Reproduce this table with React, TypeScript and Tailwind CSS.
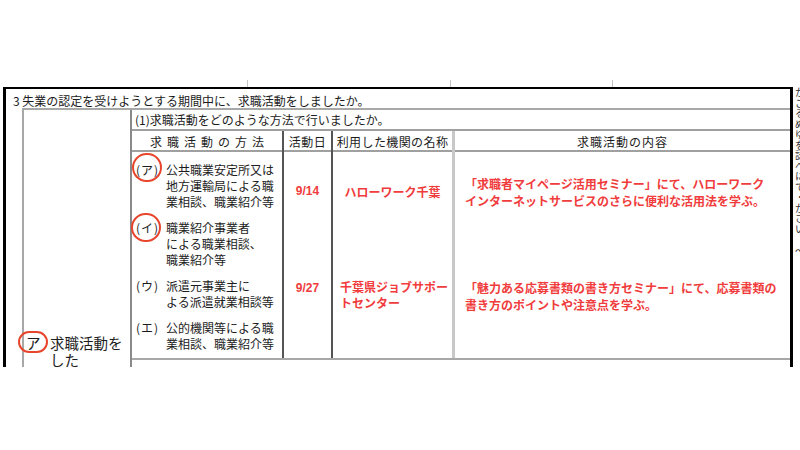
const RED = "text-[#f03c3c]";

type Method = { mark: string; lines: string[]; circle?: { left: string; top: string } };

const METHODS: Method[] = [
  { mark: "ア", lines: ["公共職業安定所又は", "地方運輸局による職", "業相談、職業紹介等"], circle: { left: "left-[-4px]", top: "top-[-9px]" } },
  { mark: "イ", lines: ["職業紹介事業者", "による職業相談、", "職業紹介等"], circle: { left: "left-[-5px]", top: "top-[-7px]" } },
  { mark: "ウ", lines: ["派遣元事業主に", "よる派遣就業相談等"] },
  { mark: "エ", lines: ["公的機関等による職", "業相談、職業紹介等"] },
];

const EDGE = ["か", "こ", "る", "ぬ", "ゆ", "を", "認", "べ", "に", "て", "・", "か", "さ", "い"];

function MethodEntry({ m }: { m: Method }) {
  return (
    <div className="flex">
      <span className="relative w-[30px] shrink-0 leading-[16px] whitespace-nowrap">
        <span className="mr-[1px]">(</span>
        {m.mark}
        <span className="ml-[1px]">)</span>
        {m.circle && (
          <span
            className={`absolute ${m.circle.left} ${m.circle.top} h-[29px] w-[30px] rounded-full border-2 border-[#e8462c]`}
          />
        )}
      </span>
      <div className="flex flex-col whitespace-nowrap leading-[16px]">
        {m.lines.map((l) => (
          <span key={l}>{l}</span>
        ))}
      </div>
    </div>
  );
}

export default function App() {
  return (
    <div className="h-[450px] w-[800px] overflow-hidden bg-white font-['Noto_Sans_CJK_JP',sans-serif] text-[12px] text-[#1c1c1c]">
      <div className="h-[80px]" />

      {/* stubs of the table above */}
      <div className="flex h-[7px]">
        <div className="w-[247px]" />
        <div className="w-px bg-[#c4c4c4]" />
        <div className="w-[202px]" />
        <div className="w-px bg-[#c4c4c4]" />
        <div className="w-[161px]" />
        <div className="w-px bg-[#c4c4c4]" />
      </div>

      <div className="flex h-[280px] overflow-hidden">
        <div className="w-[3px] shrink-0" />

        <div className="flex w-[790px] shrink-0 flex-col border-l-[3px] border-r-[3px] border-t-2 border-black">
          <div className="h-[19px] shrink-0 whitespace-nowrap pl-[7px] pt-[4px] leading-[16px]">
            3 失業の認定を受けようとする期間中に、求職活動をしましたか。
          </div>

          <div className="flex flex-1">
            <div className="w-[16px] shrink-0" />
            <div className="flex flex-1 border-l-2 border-t-2 border-[#a8a8a8]">
              {/* left label */}
              <div className="flex w-[106px] shrink-0 items-start pl-[2px] pt-[224px] text-[14.5px] leading-[17px]">
                <span className="relative">
                  ア
                  <span className="absolute left-[-8px] top-[-3px] h-[22px] w-[30px] rounded-full border-2 border-[#e8462c]" />
                </span>
                <div className="ml-[9.5px] flex flex-col">
                  <span>求職活動を</span>
                  <span>した</span>
                </div>
              </div>

              {/* table */}
              <div className="flex flex-1 flex-col border-l-2 border-[#8a8a8a]">
                <div className="h-[21px] shrink-0 border-b-2 border-[#a0a0a0] pl-[3px] leading-[19px]">
                  (1)求職活動をどのような方法で行いましたか。
                </div>

                <div className="grid h-[21px] shrink-0 grid-cols-[150px_49px_121px_338px] border-b-2 border-[#a0a0a0] leading-[21px]">
                  <div className="pl-[5px] text-center tracking-[5px]">求職活動の方法</div>
                  <div className="border-l-2 border-[#555] text-center tracking-[0.5px]">活動日</div>
                  <div className="border-l-2 border-[#555] text-center tracking-[0.4px]">利用した機関の名称</div>
                  <div className="border-l-[3px] border-[#c8c8c8] text-center tracking-[1px]">求職活動の内容</div>
                </div>

                <div className="grid h-[208px] shrink-0 grid-cols-[150px_49px_121px_338px] border-b-2 border-[#a8a8a8]">
                  <div className="flex flex-col gap-[10px] pl-[4px] pt-[10px]">
                    {METHODS.map((m) => (
                      <MethodEntry key={m.mark} m={m} />
                    ))}
                  </div>

                  <div className={`flex flex-col items-center border-l-2 border-[#555] pt-[31px] font-['Liberation_Sans',sans-serif] font-bold leading-[16px] ${RED}`}>
                    <span>9/14</span>
                    <span className="mt-[81px]">9/27</span>
                  </div>

                  <div className={`flex flex-col border-l-2 border-[#555] pt-[32px] font-bold leading-[16px] ${RED}`}>
                    <span className="text-center">ハローワーク千葉</span>
                    <div className="mt-[79px] flex flex-col whitespace-nowrap pl-[7px]">
                      <span>千葉県ジョブサポー</span>
                      <span>トセンター</span>
                    </div>
                  </div>

                  <div className={`flex flex-col border-l-[3px] border-[#c8c8c8] pl-[10px] pt-[23px] font-bold leading-[17px] ${RED}`}>
                    <div className="flex flex-col whitespace-nowrap">
                      <span>「求職者マイページ活用セミナー」にて、ハローワーク</span>
                      <span>インターネットサービスのさらに便利な活用法を学ぶ。</span>
                    </div>
                    <div className="mt-[70px] flex flex-col whitespace-nowrap">
                      <span>「魅力ある応募書類の書き方セミナー」にて、応募書類の</span>
                      <span>書き方のポイントや注意点を学ぶ。</span>
                    </div>
                  </div>
                </div>
              </div>
            </div>
          </div>
        </div>

        {/* cut-off text of the next page column */}
        <div className="w-[7px] shrink-0 overflow-hidden pl-[2px]">
          <div className="flex flex-col text-[10px] leading-[10.5px] text-[#333]">
            {EDGE.map((c, i) => (
              <span key={i} className="block h-[10.5px] overflow-hidden">
                {c}
              </span>
            ))}
            <span className="mt-[12px] block h-[10.5px] overflow-hidden">〜</span>
          </div>
        </div>
      </div>
    </div>
  );
}
